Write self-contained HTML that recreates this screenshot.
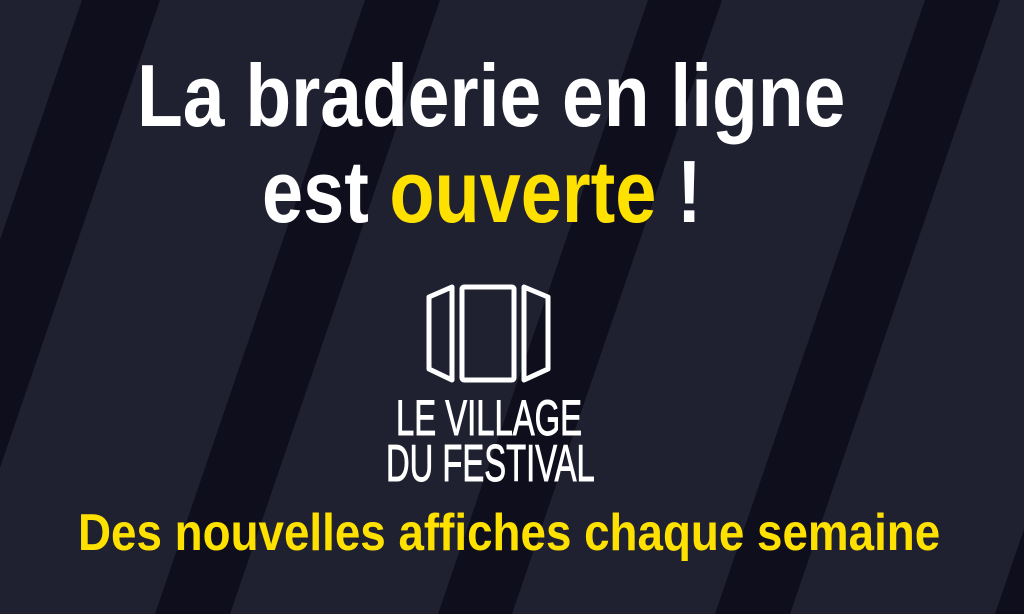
<!DOCTYPE html>
<html><head><meta charset="utf-8"><style>
html,body{margin:0;padding:0;}
body{width:1024px;height:614px;overflow:hidden;background:#1f2130;position:relative;font-family:"Liberation Sans",sans-serif;}
svg.bg{position:absolute;left:0;top:0;}
.t{position:absolute;white-space:nowrap;font-weight:bold;transform-origin:0 0;line-height:1;}
.y{color:#ffe100;}
</style></head><body>
<svg class="bg" width="1024" height="614">
<g fill="#0f0e1c">
<polygon points="82,0 160,0 -50,614 -128,614"/>
<polygon points="365,0 440,0 230,614 155,614"/>
<polygon points="648,0 722,0 512,614 438,614"/>
<polygon points="925,0 1000,0 790,614 715,614"/>
<polygon points="1205,0 1280,0 1070,614 995,614"/>
</g>
<g fill="none" stroke="#fff" stroke-width="5" stroke-linejoin="round">
<polygon points="429,297 452,287 452,380 429,369"/>
<rect x="462" y="287" width="52" height="93" rx="2"/>
<polygon points="524,287 548,297 548,369 524,380"/>
</g>
</svg>
<div class="t" style="left:137px;top:52px;font-size:88px;color:#fff;transform:scaleX(0.852);">La braderie en ligne</div>
<div class="t" style="left:262px;top:148px;font-size:88px;color:#fff;transform:scaleX(0.84);">est <span class="y">ouverte</span> !</div>
<div class="t" style="left:396px;top:393px;font-size:50px;font-weight:normal;color:#fff;transform:scaleX(0.656);-webkit-text-stroke:1px #fff;">LE VILLAGE</div>
<div class="t" style="left:386px;top:438px;font-size:52px;font-weight:normal;color:#fff;transform:scaleX(0.63);-webkit-text-stroke:1px #fff;">DU FESTIVAL</div>
<div class="t y" style="left:78px;top:507px;font-size:52px;transform:scaleX(0.88);">Des nouvelles affiches chaque semaine</div>
</body></html>
